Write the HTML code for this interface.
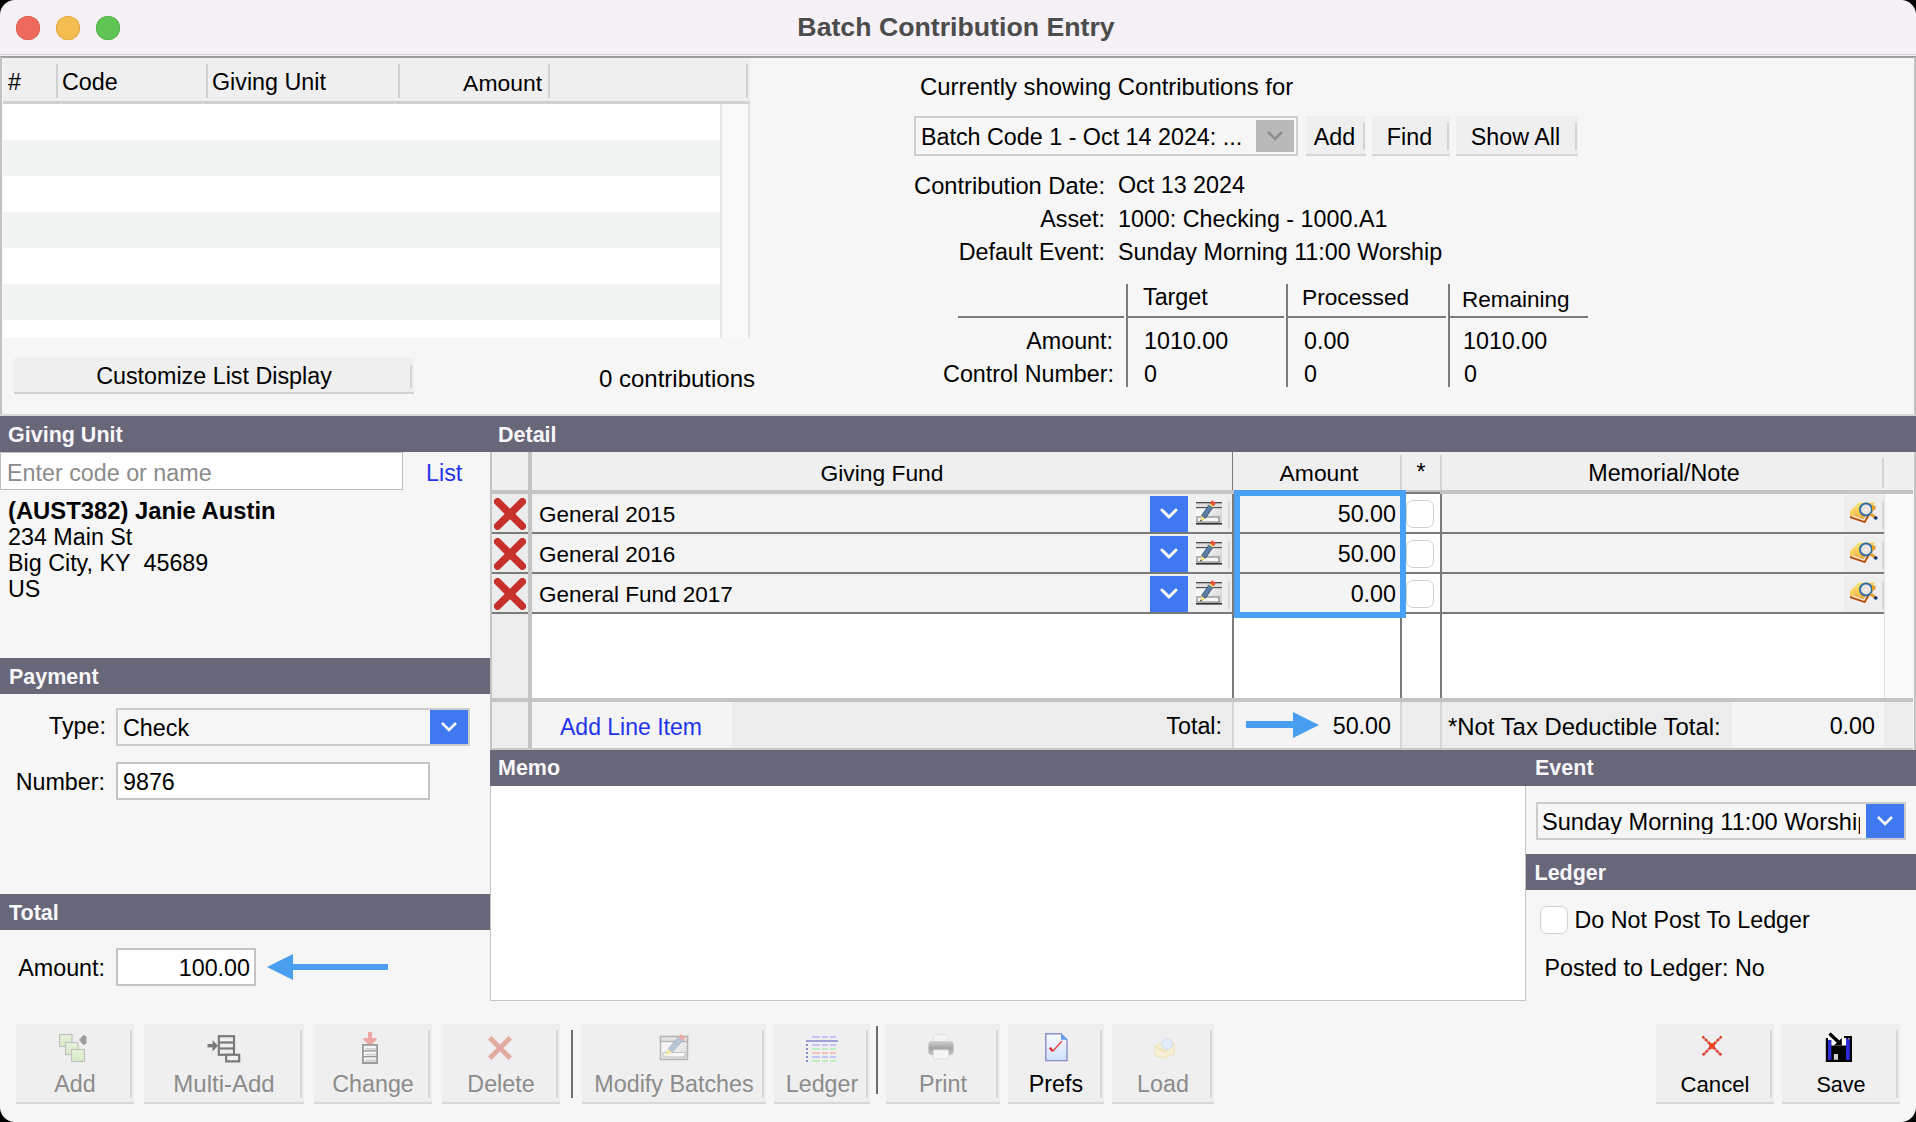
<!DOCTYPE html>
<html><head><meta charset="utf-8"><title>Batch Contribution Entry</title>
<style>
html,body{margin:0;padding:0;}
body{width:1916px;height:1122px;position:relative;overflow:hidden;background:#f6f6f6;font-family:"Liberation Sans",sans-serif;}
body>div,body>svg{position:absolute;}
.t{white-space:nowrap;}
</style></head><body>
<div style="left:0px;top:0px;width:1916px;height:56px;background:#f5f1f6"></div>
<div style="left:0px;top:54px;width:1916px;height:1px;background:#d2ced4"></div>
<div style="left:0px;top:56px;width:1916px;height:2px;background:#9e9e9e"></div>
<div style="left:16px;top:16px;width:24px;height:24px;background:#ee6a5f;border-radius:50%;box-shadow:inset 0 0 0 0.8px #d95b50"></div>
<div style="left:56px;top:16px;width:24px;height:24px;background:#f5bd4f;border-radius:50%;box-shadow:inset 0 0 0 0.8px #dea43c"></div>
<div style="left:96px;top:16px;width:24px;height:24px;background:#61c454;border-radius:50%;box-shadow:inset 0 0 0 0.8px #52ad45"></div>
<div class="t" style="left:556px;width:800px;text-align:center;top:14.4px;font-size:26.7px;line-height:26.7px;color:#4c4c4c;font-weight:bold;">Batch Contribution Entry</div>
<div style="left:0px;top:57px;width:2px;height:358px;background:#c2c2c2"></div>
<div style="left:1914px;top:57px;width:2px;height:357px;background:#c2c2c2"></div>
<div style="left:3px;top:58px;width:747px;height:45px;background:#efefef"></div>
<div style="left:3px;top:101px;width:747px;height:3px;background:#d2d2d2"></div>
<div style="left:56px;top:64px;width:2px;height:34px;background:#d0d0d0"></div>
<div style="left:206px;top:64px;width:2px;height:34px;background:#d0d0d0"></div>
<div style="left:398px;top:64px;width:2px;height:34px;background:#d0d0d0"></div>
<div style="left:548px;top:64px;width:2px;height:34px;background:#d0d0d0"></div>
<div style="left:746px;top:64px;width:2px;height:34px;background:#d0d0d0"></div>
<div class="t" style="left:8px;top:71.3px;font-size:23.3px;line-height:23.3px;color:#000;font-weight:normal;">#</div>
<div class="t" style="left:62px;top:71.3px;font-size:23.3px;line-height:23.3px;color:#000;font-weight:normal;">Code</div>
<div class="t" style="left:212px;top:71.3px;font-size:23.3px;line-height:23.3px;color:#000;font-weight:normal;">Giving Unit</div>
<div class="t" style="right:1374px;text-align:right;top:71.6px;font-size:22.9px;line-height:22.9px;color:#000;font-weight:normal;">Amount</div>
<div style="left:3px;top:104px;width:717px;height:36px;background:#ffffff"></div>
<div style="left:3px;top:140px;width:717px;height:36px;background:#f2f4f3"></div>
<div style="left:3px;top:176px;width:717px;height:36px;background:#ffffff"></div>
<div style="left:3px;top:212px;width:717px;height:36px;background:#f2f4f3"></div>
<div style="left:3px;top:248px;width:717px;height:36px;background:#ffffff"></div>
<div style="left:3px;top:284px;width:717px;height:36px;background:#f2f4f3"></div>
<div style="left:3px;top:320px;width:717px;height:18px;background:#ffffff"></div>
<div style="left:720px;top:104px;width:30px;height:234px;background:#f9f9f9;border-left:2px solid #e4e4e4;border-right:2px solid #e4e4e4;box-sizing:border-box"></div>
<div style="left:14px;top:358px;width:400px;height:36px;background:#efefef;border-bottom:2px solid #d4d4d4;box-sizing:border-box"></div>
<div style="left:410px;top:365px;width:2px;height:23px;background:#d4d4d4"></div>
<div class="t" style="left:-186px;width:800px;text-align:center;top:365.3px;font-size:23.3px;line-height:23.3px;color:#000;font-weight:normal;">Customize List Display</div>
<div class="t" style="left:277px;width:800px;text-align:center;top:367.2px;font-size:24px;line-height:24px;color:#000;font-weight:normal;">0 contributions</div>
<div class="t" style="left:920px;top:75.3px;font-size:23.9px;line-height:23.9px;color:#000;font-weight:normal;">Currently showing Contributions for</div>
<div style="left:914px;top:116px;width:384px;height:40px;background:#f6f6f6;border:2px solid #cfcfcf;box-sizing:border-box"></div>
<div style="left:1256px;top:120px;width:38px;height:32px;background:#b9b9b9"></div>
<svg style="left:1265px;top:129px" width="20" height="14" viewBox="0 0 20 14"><polyline points="3,3 10,10 17,3" fill="none" stroke="#8c8c8c" stroke-width="2.6"/></svg>
<div class="t" style="left:921px;top:125.5px;font-size:23.3px;line-height:23.3px;color:#000;font-weight:normal;">Batch Code 1 - Oct 14 2024: ...</div>
<div style="left:1306px;top:116px;width:60px;height:40px;background:#efefef;border-bottom:2px solid #d6d6d6;box-sizing:border-box"></div>
<div style="left:1363px;top:123px;width:2px;height:27px;background:#d4d4d4"></div>
<div class="t" style="left:934.5px;width:800px;text-align:center;top:125.5px;font-size:23.3px;line-height:23.3px;color:#000;font-weight:normal;">Add</div>
<div style="left:1372px;top:116px;width:78px;height:40px;background:#efefef;border-bottom:2px solid #d6d6d6;box-sizing:border-box"></div>
<div style="left:1447px;top:123px;width:2px;height:27px;background:#d4d4d4"></div>
<div class="t" style="left:1009.5px;width:800px;text-align:center;top:125.5px;font-size:23.3px;line-height:23.3px;color:#000;font-weight:normal;">Find</div>
<div style="left:1456px;top:116px;width:122px;height:40px;background:#efefef;border-bottom:2px solid #d6d6d6;box-sizing:border-box"></div>
<div style="left:1575px;top:123px;width:2px;height:27px;background:#d4d4d4"></div>
<div class="t" style="left:1115.5px;width:800px;text-align:center;top:125.5px;font-size:23.3px;line-height:23.3px;color:#000;font-weight:normal;">Show All</div>
<div class="t" style="right:811px;text-align:right;top:175.0px;font-size:23.7px;line-height:23.7px;color:#000;font-weight:normal;">Contribution Date:</div>
<div class="t" style="left:1118px;top:173.7px;font-size:23.3px;line-height:23.3px;color:#000;font-weight:normal;">Oct 13 2024</div>
<div class="t" style="right:811px;text-align:right;top:208.0px;font-size:23.3px;line-height:23.3px;color:#000;font-weight:normal;">Asset:</div>
<div class="t" style="left:1118px;top:208.0px;font-size:23.3px;line-height:23.3px;color:#000;font-weight:normal;">1000: Checking - 1000.A1</div>
<div class="t" style="right:811px;text-align:right;top:241.3px;font-size:23.3px;line-height:23.3px;color:#000;font-weight:normal;">Default Event:</div>
<div class="t" style="left:1118px;top:241.3px;font-size:23.3px;line-height:23.3px;color:#000;font-weight:normal;">Sunday Morning 11:00 Worship</div>
<div style="left:1126px;top:284px;width:2px;height:103px;background:#7b7b7b"></div>
<div style="left:1286px;top:284px;width:2px;height:103px;background:#7b7b7b"></div>
<div style="left:1448px;top:284px;width:2px;height:103px;background:#7b7b7b"></div>
<div style="left:958px;top:316px;width:166px;height:2px;background:#7b7b7b"></div>
<div style="left:1128px;top:316px;width:156px;height:2px;background:#7b7b7b"></div>
<div style="left:1288px;top:316px;width:158px;height:2px;background:#7b7b7b"></div>
<div style="left:1450px;top:316px;width:138px;height:2px;background:#7b7b7b"></div>
<div class="t" style="left:1143px;top:285.8px;font-size:23.3px;line-height:23.3px;color:#000;font-weight:normal;">Target</div>
<div class="t" style="left:1302px;top:286.3px;font-size:22.7px;line-height:22.7px;color:#000;font-weight:normal;">Processed</div>
<div class="t" style="left:1462px;top:288.5px;font-size:22.5px;line-height:22.5px;color:#000;font-weight:normal;">Remaining</div>
<div class="t" style="right:803px;text-align:right;top:329.5px;font-size:23.3px;line-height:23.3px;color:#000;font-weight:normal;">Amount:</div>
<div class="t" style="right:802px;text-align:right;top:363.3px;font-size:23.3px;line-height:23.3px;color:#000;font-weight:normal;">Control Number:</div>
<div class="t" style="left:1144px;top:329.5px;font-size:23.3px;line-height:23.3px;color:#000;font-weight:normal;">1010.00</div>
<div class="t" style="left:1304px;top:329.5px;font-size:23.3px;line-height:23.3px;color:#000;font-weight:normal;">0.00</div>
<div class="t" style="left:1463px;top:329.5px;font-size:23.3px;line-height:23.3px;color:#000;font-weight:normal;">1010.00</div>
<div class="t" style="left:1144px;top:363.3px;font-size:23.3px;line-height:23.3px;color:#000;font-weight:normal;">0</div>
<div class="t" style="left:1304px;top:363.3px;font-size:23.3px;line-height:23.3px;color:#000;font-weight:normal;">0</div>
<div class="t" style="left:1464px;top:363.3px;font-size:23.3px;line-height:23.3px;color:#000;font-weight:normal;">0</div>
<div style="left:0px;top:414px;width:1916px;height:2px;background:#d8d8d8"></div>
<div style="left:0px;top:416px;width:1916px;height:36px;background:#686679"></div>
<div class="t" style="left:8px;top:425.2px;font-size:21.5px;line-height:21.5px;color:#f8f8fa;font-weight:bold;">Giving Unit</div>
<div class="t" style="left:498px;top:424.5px;font-size:21.5px;line-height:21.5px;color:#f8f8fa;font-weight:bold;">Detail</div>
<div style="left:0px;top:452px;width:403px;height:38px;background:#fff;border:1px solid #bfbfbf;box-sizing:border-box"></div>
<div class="t" style="left:7px;top:461.8px;font-size:23.3px;line-height:23.3px;color:#8b8b8b;font-weight:normal;">Enter code or name</div>
<div class="t" style="left:426px;top:461.8px;font-size:23.3px;line-height:23.3px;color:#2234ea;font-weight:normal;">List</div>
<div class="t" style="left:8px;top:498.9px;font-size:23.8px;line-height:23.8px;color:#000;font-weight:bold;">(AUST382) Janie Austin</div>
<div class="t" style="left:8px;top:525.7px;font-size:23.3px;line-height:23.3px;color:#000;font-weight:normal;">234 Main St</div>
<div class="t" style="left:8px;top:551.7px;font-size:23.3px;line-height:23.3px;color:#000;font-weight:normal;">Big City, KY&nbsp;&nbsp;45689</div>
<div class="t" style="left:8px;top:577.7px;font-size:23.3px;line-height:23.3px;color:#000;font-weight:normal;">US</div>
<div style="left:0px;top:658px;width:490px;height:36px;background:#686679"></div>
<div class="t" style="left:9px;top:667.4px;font-size:21.5px;line-height:21.5px;color:#f8f8fa;font-weight:bold;">Payment</div>
<div class="t" style="right:1810px;text-align:right;top:715.3px;font-size:23.3px;line-height:23.3px;color:#000;font-weight:normal;">Type:</div>
<div style="left:116px;top:708px;width:354px;height:38px;background:#f6f6f6;border:2px solid #cccccc;box-sizing:border-box"></div>
<div style="left:430px;top:710px;width:38px;height:34px;background:#3f78ef"></div>
<svg style="left:439px;top:720px" width="20" height="14" viewBox="0 0 20 14"><polyline points="3,3 10,10 17,3" fill="none" stroke="#ffffff" stroke-width="2.6"/></svg>
<div class="t" style="left:123px;top:717.0px;font-size:23.3px;line-height:23.3px;color:#000;font-weight:normal;">Check</div>
<div class="t" style="right:1811px;text-align:right;top:771.3px;font-size:23.3px;line-height:23.3px;color:#000;font-weight:normal;">Number:</div>
<div style="left:116px;top:762px;width:314px;height:38px;background:#fff;border:2px solid #c4c4c4;box-sizing:border-box"></div>
<div class="t" style="left:123px;top:771.3px;font-size:23.3px;line-height:23.3px;color:#000;font-weight:normal;">9876</div>
<div style="left:0px;top:894px;width:490px;height:36px;background:#686679"></div>
<div class="t" style="left:9px;top:902.8px;font-size:21.5px;line-height:21.5px;color:#f8f8fa;font-weight:bold;">Total</div>
<div class="t" style="right:1811px;text-align:right;top:956.8px;font-size:23.3px;line-height:23.3px;color:#000;font-weight:normal;">Amount:</div>
<div style="left:116px;top:948px;width:140px;height:38px;background:#fff;border:2px solid #c4c4c4;box-sizing:border-box"></div>
<div class="t" style="right:1666px;text-align:right;top:956.8px;font-size:23.3px;line-height:23.3px;color:#000;font-weight:normal;">100.00</div>
<svg style="left:266px;top:952px" width="124" height="30" viewBox="0 0 124 30"><rect x="25" y="12" width="97" height="6" fill="#4a9ef0"/><polygon points="1,15 27,2 27,28" fill="#4a9ef0"/></svg>
<div style="left:490px;top:452px;width:2px;height:298px;background:#c4c4c4"></div>
<div style="left:1914px;top:452px;width:2px;height:298px;background:#c4c4c4"></div>
<div style="left:492px;top:452px;width:1421px;height:38px;background:#efefef"></div>
<div style="left:528px;top:452px;width:4px;height:38px;background:#c4c4c4"></div>
<div style="left:1232px;top:452px;width:1px;height:38px;background:#7a7a7a"></div>
<div style="left:1400px;top:455px;width:2px;height:35px;background:#d4d4d4"></div>
<div style="left:1440px;top:455px;width:2px;height:35px;background:#d4d4d4"></div>
<div style="left:1882px;top:458px;width:2px;height:30px;background:#d4d4d4"></div>
<div class="t" style="left:482px;width:800px;text-align:center;top:462.2px;font-size:22.8px;line-height:22.8px;color:#000;font-weight:normal;">Giving Fund</div>
<div class="t" style="left:919px;width:800px;text-align:center;top:461.6px;font-size:22.9px;line-height:22.9px;color:#000;font-weight:normal;">Amount</div>
<div class="t" style="left:1021px;width:800px;text-align:center;top:461.3px;font-size:23.3px;line-height:23.3px;color:#000;font-weight:normal;">*</div>
<div class="t" style="left:1264px;width:800px;text-align:center;top:461.9px;font-size:23.3px;line-height:23.3px;color:#000;font-weight:normal;">Memorial/Note</div>
<div style="left:492px;top:490px;width:1421px;height:4px;background:#c4c4c4"></div>
<div style="left:492px;top:494px;width:36px;height:204px;background:#ececec"></div>
<div style="left:528px;top:494px;width:4px;height:208px;background:#c4c4c4"></div>
<div style="left:532px;top:494px;width:1352px;height:204px;background:#ffffff"></div>
<div style="left:1884px;top:494px;width:29px;height:204px;background:#fafafa;border-left:1px solid #e4e4e4;box-sizing:border-box"></div>
<div style="left:532px;top:494px;width:700px;height:38px;background:#f0f0f0"></div>
<div style="left:534px;top:496px;width:614px;height:36px;background:#f4f4f4"></div>
<div style="left:1234px;top:494px;width:166px;height:38px;background:#f4f4f4"></div>
<div style="left:1442px;top:494px;width:442px;height:38px;background:#f4f4f4"></div>
<div style="left:492px;top:532px;width:36px;height:2px;background:#7a7a7a"></div>
<div style="left:532px;top:532px;width:1352px;height:2px;background:#7a7a7a"></div>
<svg style="left:494px;top:498px" width="32" height="32" viewBox="0 0 32 32"><path d="M3.6,3.7 L28.4,28.2 M28.4,3.7 L3.6,28.2" stroke="#c8302c" stroke-width="7.4" stroke-linecap="round"/></svg>
<div class="t" style="left:539px;top:504.0px;font-size:22.5px;line-height:22.5px;color:#000;font-weight:normal;">General 2015</div>
<div style="left:1150px;top:496px;width:38px;height:36px;background:#3f78ef"></div>
<svg style="left:1159px;top:508px" width="20" height="12" viewBox="0 0 20 12"><polyline points="3,2 10,9 17,2" fill="none" stroke="#ffffff" stroke-width="3" stroke-linecap="round" stroke-linejoin="round"/></svg>
<div style="left:1190px;top:495px;width:40px;height:37px;background:#efefef"></div>
<div style="left:1228px;top:501px;width:2px;height:28px;background:#d8d8d8"></div>
<svg style="left:1195px;top:500px" width="28" height="26" viewBox="0 0 28 26">
<defs><linearGradient id="pg0" x1="0" y1="0" x2="1" y2="1"><stop offset="0.4" stop-color="#f6f6f6"/><stop offset="1" stop-color="#c8c8c8"/></linearGradient></defs>
<rect x="1" y="2" width="26" height="22" fill="url(#pg0)"/>
<rect x="1" y="2" width="26" height="1.6" fill="#4a4a4a"/>
<rect x="1" y="3.6" width="26" height="4" fill="#dedede"/>
<rect x="1" y="7" width="26" height="1.2" fill="#555"/>
<rect x="2" y="17" width="22" height="5" fill="#f8f8f8" stroke="#666" stroke-width="0.9"/>
<rect x="1" y="23" width="26" height="1.6" fill="#333"/>
<polygon points="5.20,21.80 10.57,18.20 6.60,15.49" fill="#f2e27a"/>
<polygon points="10.57,18.20 17.90,7.46 13.93,4.75 6.60,15.49" fill="#5a7fa0" stroke="#27466a" stroke-width="0.7"/>
<polygon points="17.90,7.46 18.74,6.22 14.78,3.51 13.93,4.75" fill="#f4ec70"/>
<polygon points="18.74,6.22 21.00,2.92 17.04,0.21 14.78,3.51" fill="#e4533a"/>
<polygon points="5.20,21.80 7.18,20.49 5.70,19.48" fill="#222"/>
</svg>
<div class="t" style="right:520px;text-align:right;top:503.3px;font-size:23.3px;line-height:23.3px;color:#000;font-weight:normal;">50.00</div>
<div style="left:1406px;top:500px;width:28px;height:28px;background:#fff;border:1px solid #d0d0d0;border-radius:7px;box-sizing:border-box"></div>
<div style="left:1844px;top:495px;width:40px;height:37px;background:#eeeeee"></div>
<div style="left:1882px;top:501px;width:2px;height:28px;background:#d6d6d6"></div>
<svg style="left:1849px;top:502px" width="30" height="22" viewBox="0 0 30 22">
<defs><linearGradient id="bg0" x1="0" y1="0" x2="0.6" y2="1"><stop offset="0" stop-color="#fff27a"/><stop offset="1" stop-color="#e89a30"/></linearGradient></defs>
<path d="M1,9 L10,0.5 L25,0.5 L25,6 L20,15 L16,21 L1,16 Z" fill="url(#bg0)"/>
<path d="M1,16 L16,21 L20,14 L18,14 L15,19 L1,14 Z" fill="#b24a12"/>
<path d="M3,14 L15,18 L18,13" fill="none" stroke="#e8eefc" stroke-width="1.2"/>
<circle cx="17" cy="7.5" r="6" fill="#e8e4dc" stroke="#2f6fa8" stroke-width="2"/>
<path d="M14,10 L20,4" stroke="#ffffff" stroke-width="1" opacity="0.7"/>
<path d="M21.5,12 L27,16" stroke="#e0a030" stroke-width="3"/>
<path d="M25.5,15 L28,17" stroke="#1a3a7a" stroke-width="3"/>
<path d="M23,3.5 L27,4 L26,8 L23,9 Z" fill="#e0a030"/>
</svg>
<div style="left:532px;top:534px;width:700px;height:38px;background:#f0f0f0"></div>
<div style="left:534px;top:536px;width:614px;height:36px;background:#f4f4f4"></div>
<div style="left:1234px;top:534px;width:166px;height:38px;background:#f4f4f4"></div>
<div style="left:1442px;top:534px;width:442px;height:38px;background:#f4f4f4"></div>
<div style="left:492px;top:572px;width:36px;height:2px;background:#7a7a7a"></div>
<div style="left:532px;top:572px;width:1352px;height:2px;background:#7a7a7a"></div>
<svg style="left:494px;top:538px" width="32" height="32" viewBox="0 0 32 32"><path d="M3.6,3.7 L28.4,28.2 M28.4,3.7 L3.6,28.2" stroke="#c8302c" stroke-width="7.4" stroke-linecap="round"/></svg>
<div class="t" style="left:539px;top:544.0px;font-size:22.5px;line-height:22.5px;color:#000;font-weight:normal;">General 2016</div>
<div style="left:1150px;top:536px;width:38px;height:36px;background:#3f78ef"></div>
<svg style="left:1159px;top:548px" width="20" height="12" viewBox="0 0 20 12"><polyline points="3,2 10,9 17,2" fill="none" stroke="#ffffff" stroke-width="3" stroke-linecap="round" stroke-linejoin="round"/></svg>
<div style="left:1190px;top:535px;width:40px;height:37px;background:#efefef"></div>
<div style="left:1228px;top:541px;width:2px;height:28px;background:#d8d8d8"></div>
<svg style="left:1195px;top:540px" width="28" height="26" viewBox="0 0 28 26">
<defs><linearGradient id="pg1" x1="0" y1="0" x2="1" y2="1"><stop offset="0.4" stop-color="#f6f6f6"/><stop offset="1" stop-color="#c8c8c8"/></linearGradient></defs>
<rect x="1" y="2" width="26" height="22" fill="url(#pg1)"/>
<rect x="1" y="2" width="26" height="1.6" fill="#4a4a4a"/>
<rect x="1" y="3.6" width="26" height="4" fill="#dedede"/>
<rect x="1" y="7" width="26" height="1.2" fill="#555"/>
<rect x="2" y="17" width="22" height="5" fill="#f8f8f8" stroke="#666" stroke-width="0.9"/>
<rect x="1" y="23" width="26" height="1.6" fill="#333"/>
<polygon points="5.20,21.80 10.57,18.20 6.60,15.49" fill="#f2e27a"/>
<polygon points="10.57,18.20 17.90,7.46 13.93,4.75 6.60,15.49" fill="#5a7fa0" stroke="#27466a" stroke-width="0.7"/>
<polygon points="17.90,7.46 18.74,6.22 14.78,3.51 13.93,4.75" fill="#f4ec70"/>
<polygon points="18.74,6.22 21.00,2.92 17.04,0.21 14.78,3.51" fill="#e4533a"/>
<polygon points="5.20,21.80 7.18,20.49 5.70,19.48" fill="#222"/>
</svg>
<div class="t" style="right:520px;text-align:right;top:543.3px;font-size:23.3px;line-height:23.3px;color:#000;font-weight:normal;">50.00</div>
<div style="left:1406px;top:540px;width:28px;height:28px;background:#fff;border:1px solid #d0d0d0;border-radius:7px;box-sizing:border-box"></div>
<div style="left:1844px;top:535px;width:40px;height:37px;background:#eeeeee"></div>
<div style="left:1882px;top:541px;width:2px;height:28px;background:#d6d6d6"></div>
<svg style="left:1849px;top:542px" width="30" height="22" viewBox="0 0 30 22">
<defs><linearGradient id="bg1" x1="0" y1="0" x2="0.6" y2="1"><stop offset="0" stop-color="#fff27a"/><stop offset="1" stop-color="#e89a30"/></linearGradient></defs>
<path d="M1,9 L10,0.5 L25,0.5 L25,6 L20,15 L16,21 L1,16 Z" fill="url(#bg1)"/>
<path d="M1,16 L16,21 L20,14 L18,14 L15,19 L1,14 Z" fill="#b24a12"/>
<path d="M3,14 L15,18 L18,13" fill="none" stroke="#e8eefc" stroke-width="1.2"/>
<circle cx="17" cy="7.5" r="6" fill="#e8e4dc" stroke="#2f6fa8" stroke-width="2"/>
<path d="M14,10 L20,4" stroke="#ffffff" stroke-width="1" opacity="0.7"/>
<path d="M21.5,12 L27,16" stroke="#e0a030" stroke-width="3"/>
<path d="M25.5,15 L28,17" stroke="#1a3a7a" stroke-width="3"/>
<path d="M23,3.5 L27,4 L26,8 L23,9 Z" fill="#e0a030"/>
</svg>
<div style="left:532px;top:574px;width:700px;height:38px;background:#f0f0f0"></div>
<div style="left:534px;top:576px;width:614px;height:36px;background:#f4f4f4"></div>
<div style="left:1234px;top:574px;width:166px;height:38px;background:#f4f4f4"></div>
<div style="left:1442px;top:574px;width:442px;height:38px;background:#f4f4f4"></div>
<div style="left:492px;top:612px;width:36px;height:2px;background:#7a7a7a"></div>
<div style="left:532px;top:612px;width:1352px;height:2px;background:#7a7a7a"></div>
<svg style="left:494px;top:578px" width="32" height="32" viewBox="0 0 32 32"><path d="M3.6,3.7 L28.4,28.2 M28.4,3.7 L3.6,28.2" stroke="#c8302c" stroke-width="7.4" stroke-linecap="round"/></svg>
<div class="t" style="left:539px;top:584.0px;font-size:22.5px;line-height:22.5px;color:#000;font-weight:normal;">General Fund 2017</div>
<div style="left:1150px;top:576px;width:38px;height:36px;background:#3f78ef"></div>
<svg style="left:1159px;top:588px" width="20" height="12" viewBox="0 0 20 12"><polyline points="3,2 10,9 17,2" fill="none" stroke="#ffffff" stroke-width="3" stroke-linecap="round" stroke-linejoin="round"/></svg>
<div style="left:1190px;top:575px;width:40px;height:37px;background:#efefef"></div>
<div style="left:1228px;top:581px;width:2px;height:28px;background:#d8d8d8"></div>
<svg style="left:1195px;top:580px" width="28" height="26" viewBox="0 0 28 26">
<defs><linearGradient id="pg2" x1="0" y1="0" x2="1" y2="1"><stop offset="0.4" stop-color="#f6f6f6"/><stop offset="1" stop-color="#c8c8c8"/></linearGradient></defs>
<rect x="1" y="2" width="26" height="22" fill="url(#pg2)"/>
<rect x="1" y="2" width="26" height="1.6" fill="#4a4a4a"/>
<rect x="1" y="3.6" width="26" height="4" fill="#dedede"/>
<rect x="1" y="7" width="26" height="1.2" fill="#555"/>
<rect x="2" y="17" width="22" height="5" fill="#f8f8f8" stroke="#666" stroke-width="0.9"/>
<rect x="1" y="23" width="26" height="1.6" fill="#333"/>
<polygon points="5.20,21.80 10.57,18.20 6.60,15.49" fill="#f2e27a"/>
<polygon points="10.57,18.20 17.90,7.46 13.93,4.75 6.60,15.49" fill="#5a7fa0" stroke="#27466a" stroke-width="0.7"/>
<polygon points="17.90,7.46 18.74,6.22 14.78,3.51 13.93,4.75" fill="#f4ec70"/>
<polygon points="18.74,6.22 21.00,2.92 17.04,0.21 14.78,3.51" fill="#e4533a"/>
<polygon points="5.20,21.80 7.18,20.49 5.70,19.48" fill="#222"/>
</svg>
<div class="t" style="right:520px;text-align:right;top:583.3px;font-size:23.3px;line-height:23.3px;color:#000;font-weight:normal;">0.00</div>
<div style="left:1406px;top:580px;width:28px;height:28px;background:#fff;border:1px solid #d0d0d0;border-radius:7px;box-sizing:border-box"></div>
<div style="left:1844px;top:575px;width:40px;height:37px;background:#eeeeee"></div>
<div style="left:1882px;top:581px;width:2px;height:28px;background:#d6d6d6"></div>
<svg style="left:1849px;top:582px" width="30" height="22" viewBox="0 0 30 22">
<defs><linearGradient id="bg2" x1="0" y1="0" x2="0.6" y2="1"><stop offset="0" stop-color="#fff27a"/><stop offset="1" stop-color="#e89a30"/></linearGradient></defs>
<path d="M1,9 L10,0.5 L25,0.5 L25,6 L20,15 L16,21 L1,16 Z" fill="url(#bg2)"/>
<path d="M1,16 L16,21 L20,14 L18,14 L15,19 L1,14 Z" fill="#b24a12"/>
<path d="M3,14 L15,18 L18,13" fill="none" stroke="#e8eefc" stroke-width="1.2"/>
<circle cx="17" cy="7.5" r="6" fill="#e8e4dc" stroke="#2f6fa8" stroke-width="2"/>
<path d="M14,10 L20,4" stroke="#ffffff" stroke-width="1" opacity="0.7"/>
<path d="M21.5,12 L27,16" stroke="#e0a030" stroke-width="3"/>
<path d="M25.5,15 L28,17" stroke="#1a3a7a" stroke-width="3"/>
<path d="M23,3.5 L27,4 L26,8 L23,9 Z" fill="#e0a030"/>
</svg>
<div style="left:1232px;top:494px;width:2px;height:204px;background:#7a7a7a"></div>
<div style="left:1400px;top:494px;width:2px;height:204px;background:#7a7a7a"></div>
<div style="left:1440px;top:494px;width:2px;height:204px;background:#7a7a7a"></div>
<div style="left:1402px;top:492px;width:38px;height:2px;background:#7a7a7a"></div>
<div style="left:1234px;top:490px;width:172px;height:128px;border:6px solid #4aa0f5;box-sizing:border-box"></div>
<div style="left:492px;top:698px;width:1421px;height:4px;background:#c4c4c4"></div>
<div style="left:492px;top:702px;width:1421px;height:46px;background:#ececec"></div>
<div style="left:528px;top:702px;width:4px;height:46px;background:#c4c4c4"></div>
<div style="left:532px;top:702px;width:200px;height:46px;background:#f4f4f4"></div>
<div style="left:1232px;top:702px;width:2px;height:46px;background:#d6d6d6"></div>
<div style="left:1234px;top:702px;width:166px;height:46px;background:#f4f4f4"></div>
<div style="left:1400px;top:702px;width:2px;height:46px;background:#d6d6d6"></div>
<div style="left:1440px;top:702px;width:2px;height:46px;background:#d6d6d6"></div>
<div style="left:1732px;top:702px;width:152px;height:46px;background:#f4f4f4"></div>
<div class="t" style="left:560px;top:715.6px;font-size:23px;line-height:23px;color:#2234ea;font-weight:normal;">Add Line Item</div>
<div class="t" style="right:694px;text-align:right;top:715.3px;font-size:23.3px;line-height:23.3px;color:#000;font-weight:normal;">Total:</div>
<svg style="left:1244px;top:710px" width="78" height="30" viewBox="0 0 78 30"><rect x="2" y="11" width="50" height="7" fill="#4a9ef0"/><polygon points="49,2 75,15 49,28" fill="#4a9ef0"/></svg>
<div class="t" style="right:525px;text-align:right;top:715.3px;font-size:23.3px;line-height:23.3px;color:#000;font-weight:normal;">50.00</div>
<div class="t" style="left:1448px;top:714.8px;font-size:23.9px;line-height:23.9px;color:#000;font-weight:normal;">*Not Tax Deductible Total:</div>
<div class="t" style="right:41px;text-align:right;top:715.3px;font-size:23.3px;line-height:23.3px;color:#000;font-weight:normal;">0.00</div>
<div style="left:490px;top:748px;width:1423px;height:2px;background:#c8c8c8"></div>
<div style="left:490px;top:750px;width:1426px;height:36px;background:#686679"></div>
<div class="t" style="left:498px;top:758.2px;font-size:21.5px;line-height:21.5px;color:#f8f8fa;font-weight:bold;">Memo</div>
<div class="t" style="left:1535px;top:758.2px;font-size:21.5px;line-height:21.5px;color:#f8f8fa;font-weight:bold;">Event</div>
<div style="left:490px;top:786px;width:1036px;height:215px;background:#fff;border-left:1px solid #c4c4c4;border-right:1px solid #c4c4c4;border-bottom:1px solid #c4c4c4;box-sizing:border-box"></div>
<div style="left:1536px;top:802px;width:370px;height:38px;background:#f6f6f6;border:2px solid #cccccc;box-sizing:border-box"></div>
<div class="t" style="left:1542px;top:810px;width:318px;overflow:hidden;font-size:23.6px;line-height:24px;white-space:nowrap">Sunday Morning 11:00 Worship</div>
<div style="left:1866px;top:804px;width:38px;height:34px;background:#3f78ef"></div>
<svg style="left:1875px;top:814px" width="20" height="14" viewBox="0 0 20 14"><polyline points="3,3 10,10 17,3" fill="none" stroke="#ffffff" stroke-width="2.6"/></svg>
<div style="left:1526px;top:854px;width:390px;height:36px;background:#686679"></div>
<div class="t" style="left:1534.5px;top:863.0px;font-size:21.5px;line-height:21.5px;color:#f8f8fa;font-weight:bold;">Ledger</div>
<div style="left:1540px;top:906px;width:28px;height:28px;background:#fff;border:1px solid #d2d2d2;border-radius:7px;box-sizing:border-box"></div>
<div class="t" style="left:1574.5px;top:909.3px;font-size:23.3px;line-height:23.3px;color:#000;font-weight:normal;">Do Not Post To Ledger</div>
<div class="t" style="left:1544.5px;top:957.0px;font-size:23.3px;line-height:23.3px;color:#000;font-weight:normal;">Posted to Ledger: No</div>
<div style="left:16px;top:1024px;width:118px;height:80px;background:#efefef;border-bottom:2px solid #d8d8d8;box-sizing:border-box"></div>
<div style="left:130px;top:1030px;width:2px;height:68px;background:#d6d6d6"></div>
<div class="t" style="left:-325.0px;width:800px;text-align:center;top:1072.7px;font-size:23.3px;line-height:23.3px;color:#8c8c8c;font-weight:normal;">Add</div>
<div style="left:144px;top:1024px;width:160px;height:80px;background:#efefef;border-bottom:2px solid #d8d8d8;box-sizing:border-box"></div>
<div style="left:300px;top:1030px;width:2px;height:68px;background:#d6d6d6"></div>
<div class="t" style="left:-176.0px;width:800px;text-align:center;top:1072.1px;font-size:24px;line-height:24px;color:#8c8c8c;font-weight:normal;">Multi-Add</div>
<div style="left:314px;top:1024px;width:118px;height:80px;background:#efefef;border-bottom:2px solid #d8d8d8;box-sizing:border-box"></div>
<div style="left:428px;top:1030px;width:2px;height:68px;background:#d6d6d6"></div>
<div class="t" style="left:-27.0px;width:800px;text-align:center;top:1072.7px;font-size:23.3px;line-height:23.3px;color:#8c8c8c;font-weight:normal;">Change</div>
<div style="left:442px;top:1024px;width:118px;height:80px;background:#efefef;border-bottom:2px solid #d8d8d8;box-sizing:border-box"></div>
<div style="left:556px;top:1030px;width:2px;height:68px;background:#d6d6d6"></div>
<div class="t" style="left:101.0px;width:800px;text-align:center;top:1072.7px;font-size:23.3px;line-height:23.3px;color:#8c8c8c;font-weight:normal;">Delete</div>
<div style="left:582px;top:1024px;width:184px;height:80px;background:#efefef;border-bottom:2px solid #d8d8d8;box-sizing:border-box"></div>
<div style="left:762px;top:1030px;width:2px;height:68px;background:#d6d6d6"></div>
<div class="t" style="left:274.0px;width:800px;text-align:center;top:1072.7px;font-size:23.3px;line-height:23.3px;color:#8c8c8c;font-weight:normal;">Modify Batches</div>
<div style="left:774px;top:1024px;width:96px;height:80px;background:#efefef;border-bottom:2px solid #d8d8d8;box-sizing:border-box"></div>
<div style="left:866px;top:1030px;width:2px;height:68px;background:#d6d6d6"></div>
<div class="t" style="left:422.0px;width:800px;text-align:center;top:1072.7px;font-size:23.3px;line-height:23.3px;color:#8c8c8c;font-weight:normal;">Ledger</div>
<div style="left:886px;top:1024px;width:114px;height:80px;background:#efefef;border-bottom:2px solid #d8d8d8;box-sizing:border-box"></div>
<div style="left:996px;top:1030px;width:2px;height:68px;background:#d6d6d6"></div>
<div class="t" style="left:543.0px;width:800px;text-align:center;top:1072.7px;font-size:23.3px;line-height:23.3px;color:#8c8c8c;font-weight:normal;">Print</div>
<div style="left:1008px;top:1024px;width:96px;height:80px;background:#efefef;border-bottom:2px solid #d8d8d8;box-sizing:border-box"></div>
<div style="left:1100px;top:1030px;width:2px;height:68px;background:#d6d6d6"></div>
<div class="t" style="left:656.0px;width:800px;text-align:center;top:1072.7px;font-size:23.3px;line-height:23.3px;color:#000;font-weight:normal;">Prefs</div>
<div style="left:1112px;top:1024px;width:102px;height:80px;background:#efefef;border-bottom:2px solid #d8d8d8;box-sizing:border-box"></div>
<div style="left:1210px;top:1030px;width:2px;height:68px;background:#d6d6d6"></div>
<div class="t" style="left:763.0px;width:800px;text-align:center;top:1072.7px;font-size:23.3px;line-height:23.3px;color:#8c8c8c;font-weight:normal;">Load</div>
<div style="left:1656px;top:1024px;width:118px;height:80px;background:#efefef;border-bottom:2px solid #d8d8d8;box-sizing:border-box"></div>
<div style="left:1770px;top:1030px;width:2px;height:68px;background:#d6d6d6"></div>
<div class="t" style="left:1315.0px;width:800px;text-align:center;top:1073.6px;font-size:22.2px;line-height:22.2px;color:#000;font-weight:normal;">Cancel</div>
<div style="left:1782px;top:1024px;width:118px;height:80px;background:#efefef;border-bottom:2px solid #d8d8d8;box-sizing:border-box"></div>
<div style="left:1896px;top:1030px;width:2px;height:68px;background:#d6d6d6"></div>
<div class="t" style="left:1441.0px;width:800px;text-align:center;top:1074.1px;font-size:21.6px;line-height:21.6px;color:#000;font-weight:normal;">Save</div>
<div style="left:571px;top:1030px;width:2px;height:68px;background:#6f6f6f"></div>
<div style="left:876px;top:1026px;width:2px;height:68px;background:#6f6f6f"></div>
<svg style="left:58px;top:1033px" width="30" height="30" viewBox="0 0 30 30">
<defs><linearGradient id="ga" x1="0" y1="0" x2="0" y2="1"><stop offset="0" stop-color="#e6f2da"/><stop offset="1" stop-color="#d6e8c4"/></linearGradient></defs>
<rect x="1.5" y="1.5" width="12.5" height="12" fill="url(#ga)" stroke="#c2c2c2" stroke-width="1.2"/>
<rect x="7.5" y="9.5" width="12.5" height="12" fill="url(#ga)" stroke="#c2c2c2" stroke-width="1.2"/>
<rect x="13.5" y="16.5" width="13" height="12" fill="url(#ga)" stroke="#c2c2c2" stroke-width="1.2"/>
<polygon points="21,7 25.5,2 28.5,3.5 28.5,10.5 25.5,12" fill="#9a9a9a"/>
</svg>
<svg style="left:206px;top:1035px" width="36" height="28" viewBox="0 0 36 28">
<rect x="12.8" y="1.2" width="15.2" height="18.6" fill="none" stroke="#7a7a7a" stroke-width="2.2"/>
<line x1="12.8" y1="7.5" x2="28" y2="7.5" stroke="#7a7a7a" stroke-width="2.2"/>
<line x1="12.8" y1="13.5" x2="28" y2="13.5" stroke="#7a7a7a" stroke-width="2.2"/>
<rect x="20.2" y="19.8" width="13" height="6.6" fill="#f0f0f0" stroke="#7a7a7a" stroke-width="2.2"/>
<rect x="1.5" y="9" width="6" height="3.4" fill="#7a7a7a"/>
<polygon points="6.5,5 12,10.7 6.5,16.5" fill="#7a7a7a"/>
</svg>
<svg style="left:361px;top:1032px" width="18" height="33" viewBox="0 0 18 33">
<rect x="7" y="0" width="4" height="10" fill="#eca8a2"/>
<polygon points="2.5,6 15.5,6 15.5,8 11,12 7,12 2.5,8" fill="#eca8a2"/>
<rect x="1" y="12" width="16" height="20" fill="#9a9a9a"/>
<rect x="2.8" y="13.8" width="12.4" height="4.4" fill="#f4f4f4"/>
<rect x="2.8" y="19.6" width="12.4" height="4.4" fill="#f4f4f4"/>
<rect x="2.8" y="25.4" width="12.4" height="4.4" fill="#f4f4f4"/>
<rect x="4.5" y="16" width="10.5" height="1.6" fill="#cfcfcf"/>
<rect x="4.5" y="21.8" width="10.5" height="1.6" fill="#cfcfcf"/>
<rect x="4.5" y="27.6" width="10.5" height="1.6" fill="#cfcfcf"/>
</svg>
<svg style="left:488px;top:1036px" width="25" height="25" viewBox="0 0 25 25">
<path d="M1.7,1.7 L22.3,22.3 M22.3,1.7 L1.7,22.3" stroke="#e3aaa5" stroke-width="5"/>
</svg>
<svg style="left:659px;top:1033px" width="30" height="28" viewBox="0 0 30 28">
<defs><linearGradient id="gm" x1="0" y1="0" x2="1" y2="1"><stop offset="0.4" stop-color="#f4f4f4"/><stop offset="1" stop-color="#d8d8d8"/></linearGradient></defs>
<rect x="1.5" y="3.5" width="27" height="23" fill="url(#gm)" stroke="#b4b4b4" stroke-width="1.4"/>
<rect x="1.5" y="3.5" width="27" height="5" fill="#e2e2e2" stroke="#b4b4b4" stroke-width="1.4"/>
<rect x="4" y="19.5" width="22" height="4.5" fill="#f8f8f8" stroke="#c0c0c0" stroke-width="1"/>
<path d="M9,16 L19.5,4 L24,7.5 L13,19.5 Z" fill="#b9c8d8" stroke="#98a8bb" stroke-width="0.6"/>
<path d="M9,16 L13,19.5 L6.5,23 Z" fill="#f4eaa8"/>
<path d="M19.5,4 L21.5,1 L26,4.5 L24,7.5 Z" fill="#eeaaa4"/>
</svg>
<svg style="left:806px;top:1036px" width="33" height="27" viewBox="0 0 33 27"><rect x="6" y="0" width="8" height="2" fill="#c4c4f4"/><rect x="16" y="0" width="6" height="2" fill="#c4c4f4"/><rect x="24" y="0" width="6" height="2" fill="#c4c4f4"/><rect x="0" y="4" width="32" height="2" fill="#9da0d6"/><rect x="0" y="8" width="2" height="2" fill="#8a8ec8"/><rect x="6" y="8" width="8" height="2" fill="#c4c4f4"/><rect x="16" y="8" width="6" height="2" fill="#c4c4f4"/><rect x="24" y="8" width="6" height="2" fill="#c4c4f4"/><rect x="0" y="12" width="2" height="2" fill="#8a8ec8"/><rect x="6" y="12" width="8" height="2" fill="#c0f0c0"/><rect x="16" y="12" width="6" height="2" fill="#c0f0c0"/><rect x="24" y="12" width="6" height="2" fill="#c0f0c0"/><rect x="0" y="16" width="2" height="2" fill="#8a8ec8"/><rect x="6" y="16" width="8" height="2" fill="#f4c0c0"/><rect x="16" y="16" width="6" height="2" fill="#f4c0c0"/><rect x="24" y="16" width="6" height="2" fill="#f4c0c0"/><rect x="0" y="20" width="2" height="2" fill="#8a8ec8"/><rect x="6" y="20" width="8" height="2" fill="#c4c4f4"/><rect x="16" y="20" width="6" height="2" fill="#c4c4f4"/><rect x="24" y="20" width="6" height="2" fill="#c4c4f4"/><rect x="0" y="24" width="2" height="2" fill="#8a8ec8"/><rect x="6" y="24" width="8" height="2" fill="#c0f0c0"/><rect x="16" y="24" width="6" height="2" fill="#c0f0c0"/><rect x="24" y="24" width="6" height="2" fill="#c0f0c0"/></svg>
<svg style="left:928px;top:1034px" width="27" height="26" viewBox="0 0 27 26">
<defs><linearGradient id="gp" x1="0" y1="0" x2="0" y2="1"><stop offset="0" stop-color="#d2d2d2"/><stop offset="0.5" stop-color="#a4a4a4"/><stop offset="1" stop-color="#c4c4c4"/></linearGradient></defs>
<rect x="5.5" y="0.5" width="15" height="9" rx="1.5" fill="#f2f2f2" stroke="#e0e0e0" stroke-width="1"/>
<rect x="0.5" y="7" width="25" height="14" rx="3" fill="url(#gp)"/>
<rect x="5.5" y="16" width="15" height="9" rx="1" fill="#f6f6f6" stroke="#dcdcdc" stroke-width="1"/>
</svg>
<svg style="left:1045px;top:1033px" width="23" height="29" viewBox="0 0 23 29">
<defs><linearGradient id="gr" x1="0" y1="0" x2="0" y2="1"><stop offset="0" stop-color="#f8fbff"/><stop offset="1" stop-color="#cfe0fa"/></linearGradient></defs>
<path d="M0.8,0.8 L16,0.8 L22,6.8 L22,27.6 L0.8,27.6 Z" fill="url(#gr)" stroke="#8a8ec8" stroke-width="1.4"/>
<path d="M16,0.8 L22,6.8 L16,6.8 Z" fill="#5f9ff0"/>
<path d="M4.8,14.8 L7.8,18.2" fill="none" stroke="#e0302a" stroke-width="2.4"/><path d="M7.8,18.2 L17,8" fill="none" stroke="#e8504a" stroke-width="1.5"/>
</svg>
<svg style="left:1154px;top:1036px" width="21" height="23" viewBox="0 0 21 23">
<path d="M1,10 L10,5 L20,8 L20,18 L11,22 L1,20 Z" fill="#f7efd2" stroke="#eadfb8" stroke-width="0.8"/>
<path d="M1,10 L11,16 L20,8" fill="none" stroke="#e3d09a" stroke-width="0.8"/>
<circle cx="13" cy="8" r="5.5" fill="#e2ecf8" stroke="#d4e0ee" stroke-width="1"/>
</svg>
<svg style="left:1701px;top:1035px" width="22" height="22" viewBox="0 0 22 22">
<path d="M1.5,1.5 L20.5,20.5 M20.5,1.5 L1.5,20.5" stroke="#c88a80" stroke-width="2.4"/>
<path d="M1.5,1.5 L20.5,20.5 M20.5,1.5 L1.5,20.5" stroke="#f03a20" stroke-width="2.4" stroke-dasharray="2,2"/>
<rect x="8" y="8" width="6" height="6" fill="#e84a30"/>
</svg>
<svg style="left:1825px;top:1031px" width="28" height="32" viewBox="0 0 28 32">
<rect x="0.8" y="7" width="26.2" height="24" fill="#000"/>
<rect x="19" y="5" width="8" height="3" fill="#000"/>
<rect x="3" y="7" width="3.4" height="2" fill="#fff"/>
<rect x="3" y="9" width="3.4" height="19.8" fill="#2c2cd8"/>
<rect x="21" y="7.5" width="3.8" height="21.3" fill="#2c2cd8"/>
<rect x="6.4" y="7" width="14.6" height="7.5" fill="#fff"/>
<rect x="8.8" y="23" width="4.2" height="5.8" fill="#d0d0d0"/>
<rect x="23" y="7" width="1.4" height="1.4" fill="#9a9a9a"/>
<path d="M4.5,2.5 L13.5,11" stroke="#fff" stroke-width="6"/>
<path d="M4.5,2.5 L13.5,11" stroke="#000" stroke-width="3.4"/>
<polygon points="8.8,14.4 16.8,14.4 16.8,7" fill="#000"/>
</svg>
<div style="left:0px;top:0px;width:15px;height:15px;background:radial-gradient(circle at 15px 15px, transparent 14.5px, #000 15.5px)"></div>
<div style="left:1901px;top:0px;width:15px;height:15px;background:radial-gradient(circle at 0px 15px, transparent 14.5px, #000 15.5px)"></div>
<div style="left:0px;top:1107px;width:15px;height:15px;background:radial-gradient(circle at 15px 0px, transparent 14.5px, #000 15.5px)"></div>
<div style="left:1901px;top:1107px;width:15px;height:15px;background:radial-gradient(circle at 0px 0px, transparent 14.5px, #000 15.5px)"></div>
</body></html>
